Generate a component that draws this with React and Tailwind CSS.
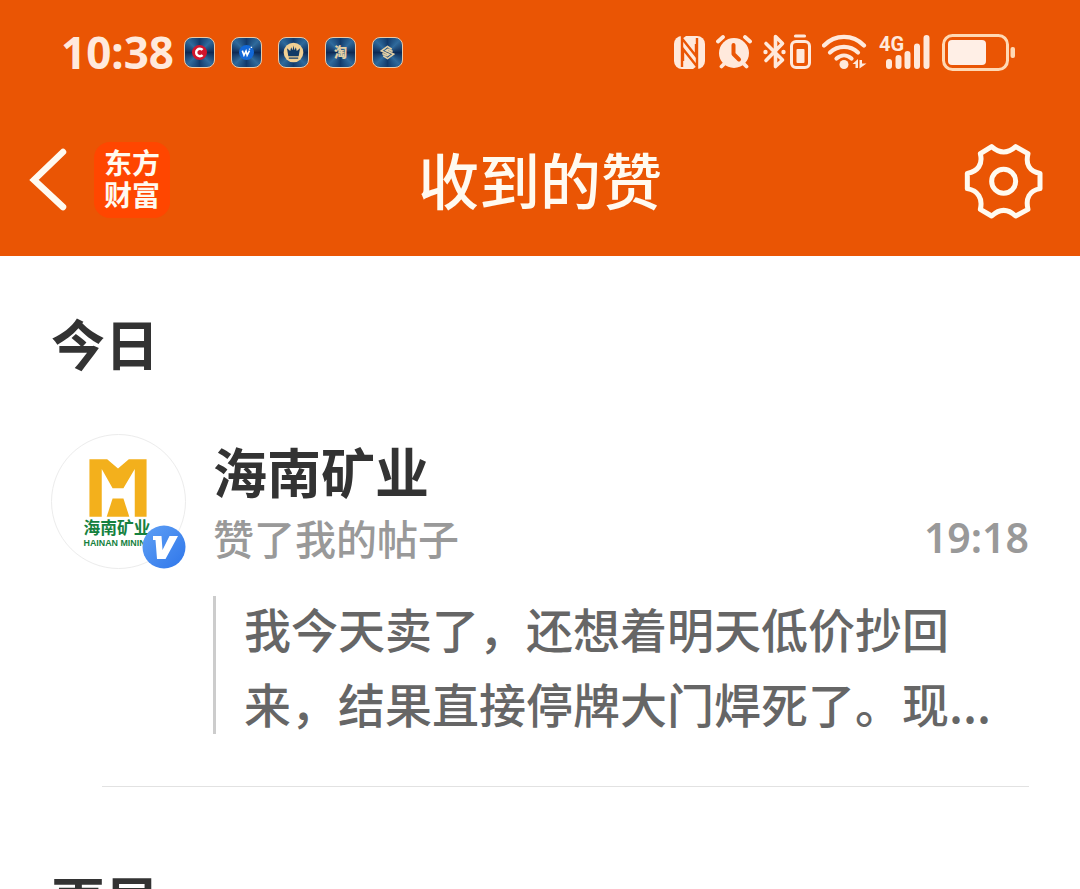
import clsx from 'clsx';

const TRAY_APPS = [
  { name: 'C', Glyph: RedC },
  { name: 'W', Glyph: BlueW },
  { name: 'crown', Glyph: Crown },
  { name: 'tao', Glyph: Tao },
  { name: 'knot', Glyph: Knot },
];

const GROUPS = [
  {
    title: '今日',
    items: [
      {
        name: '海南矿业',
        action: '赞了我的帖子',
        time: '19:18',
        lines: ['我今天卖了，还想着明天低价抄回', '来，结果直接停牌大门焊死了。现...'],
      },
    ],
  },
  { title: '更早', items: [] },
];

function RedC() {
  return (
    <>
      <circle cx="15.5" cy="15.5" r="8" fill="#d0142c" />
      <path d="M18.800 12.700a4 4 0 1 0 0 5.600" fill="none" stroke="#fff" strokeWidth="2.6" />
    </>
  );
}

function BlueW() {
  return (
    <>
      <circle cx="15.5" cy="15.5" r="8" fill="#1268d8" />
      <path d="M11 13.500l1.800 5 2.200-4.500 1.200 4.500 2.500-5" fill="none" stroke="#fff" strokeWidth="1.700" />
      <path d="M18 12h1.500M20 10h1.500" stroke="#fff" strokeWidth="1.3" />
    </>
  );
}

function Crown() {
  return (
    <>
      <circle cx="15.5" cy="15.5" r="10.500" fill="#f0cf93" />
      <path d="M8.500 11l3.500 3 1-4 1.500 3 1-5 1 5 1.500-3 1 4 3.500-3-1.500 8.500h-11z" fill="#123a66" />
      <path d="M10.500 21.500h10" stroke="#123a66" strokeWidth="1.500" />
    </>
  );
}

function Tao() {
  return (
    <text x="15.5" y="20.500" textAnchor="middle" fontSize="14" fontWeight="900" fill="#e3cfa4">
      淘
    </text>
  );
}

function Knot() {
  return (
    <g fill="none" stroke="#e3cfa4" strokeWidth="1.800">
      <path d="M20 12l-4.500-3-6.500 4.800 8 3.700-2 1.500-5-2.500" />
      <path d="M11 19l4.500 3 6.500-4.800-8-3.700 2-1.500 5 2.500" />
    </g>
  );
}

function TrayApp({ Glyph }) {
  return (
    <svg
      viewBox="0 0 31 31"
      className="size-[31px] rounded-lg border border-[#e8c9a8] bg-[conic-gradient(#123a6b,#2f6a9c,#0d2a55,#2f6a9c,#123a6b,#2f6a9c,#0d2a55,#2f6a9c,#123a6b)]"
    >
      <Glyph />
    </svg>
  );
}

function NfcIcon() {
  return (
    <svg viewBox="0 0 31 33" className="h-[33px] w-[31px]">
      <rect width="31" height="33" rx="8" fill="#ffe9dc" />
      <path d="M8 31V2.500L22 20V8" fill="none" stroke="#ea5504" strokeWidth="2.400" />
      <path d="M23 2v28.500L9 13v12" fill="none" stroke="#ea5504" strokeWidth="2.400" />
      <path d="M7 0h5l-4 3zM19 33h5l-1-3z" fill="#ea5504" />
    </svg>
  );
}

function AlarmIcon() {
  return (
    <svg viewBox="0 0 36 34" className="h-[34px] w-9" fill="none" stroke="#ffe9dc" strokeLinecap="round">
      <circle cx="18" cy="18" r="15" fill="#ffe9dc" stroke="none" />
      <path d="M2 6.500l5-4.500M34 6.500l-5-4.500M5.500 31.500l4-4M30.500 31.500l-4-4" strokeWidth="3.800" />
      <path d="M17.500 10v9l5.500 5.500" stroke="#ea5504" strokeWidth="4" strokeLinejoin="round" />
    </svg>
  );
}

function BluetoothIcon() {
  return (
    <svg viewBox="0 0 48 36" className="h-9 w-12" fill="none" stroke="#ffe9dc" strokeLinecap="round" strokeLinejoin="round">
      <path d="M3 9.500L19.500 26l-7 6.500v-30l7 7L3 26.500" strokeWidth="3.600" />
      <circle cx="2.500" cy="18" r="2.200" fill="#ffe9dc" stroke="none" />
      <circle cx="20.500" cy="18" r="2.200" fill="#ffe9dc" stroke="none" />
      <path d="M32.500 2h9" strokeWidth="3.200" />
      <rect x="28.500" y="7.500" width="18" height="26" rx="4.500" strokeWidth="3" />
      <rect x="33.500" y="15" width="8" height="14" rx="1" fill="#ffe9dc" stroke="none" />
    </svg>
  );
}

function WifiIcon() {
  return (
    <svg viewBox="0 0 46 36" className="h-9 w-[46px]" fill="none" stroke="#ffe9dc" strokeLinecap="round">
      <path d="M2 11.500C13 0 31 0 42 11.500" strokeWidth="4.200" />
      <path d="M8 18.500c8-7.500 20-7.500 28 0" strokeWidth="4.200" />
      <path d="M14.500 24.500c4.500-4 10.500-4 15 0" strokeWidth="4.200" />
      <circle cx="22" cy="30.500" r="4.500" fill="#ffe9dc" stroke="none" />
      <path d="M30.500 30L36 25v9h-2.500v-4zM37.500 34.500V26H40v3.500h4.500z" fill="#ffe9dc" stroke="none" />
    </svg>
  );
}

function SignalIcon() {
  return (
    <svg viewBox="0 0 52 36" className="h-9 w-[52px] overflow-visible">
      <text x="0" y="17" fontSize="20" fontWeight="700" fill="#ffe9dc" fontFamily="Roboto, sans-serif">
        4G
      </text>
      <path
        d="M10 32v-4M19.500 32v-8M28.500 32V20M38 32V12.500M47.500 32V4"
        stroke="#ffe9dc"
        strokeWidth="6"
        strokeLinecap="round"
      />
    </svg>
  );
}

function BatteryIcon() {
  return (
    <svg viewBox="0 0 74 37" className="h-[37px] w-[74px]">
      <rect x="1.500" y="1.500" width="64" height="34" rx="9" fill="none" stroke="#ffd9b4" strokeWidth="3" />
      <rect x="6" y="6" width="38" height="25" rx="4" fill="#ffefe6" />
      <rect x="68.500" y="13" width="4.500" height="11" rx="2" fill="#ffd9b4" />
    </svg>
  );
}

function StatusBar() {
  return (
    <div className="flex h-[104px] items-center justify-between pr-[64px] pl-[61px] text-[#ffe9dc]">
      <div className="flex items-center gap-2.5">
        <span className="font-['Noto_Sans','Open_Sans',sans-serif] text-[44px] leading-none font-bold">10:38</span>
        <div className="flex gap-4">
          {TRAY_APPS.map((app) => (
            <TrayApp key={app.name} Glyph={app.Glyph} />
          ))}
        </div>
      </div>
      <div className="flex items-center gap-[11px]">
        <NfcIcon />
        <AlarmIcon />
        <BluetoothIcon />
        <WifiIcon />
        <SignalIcon />
        <BatteryIcon />
      </div>
    </div>
  );
}

function NavBar() {
  return (
    <nav className="grid h-[152px] grid-cols-[1fr_auto_1fr] items-center px-7 text-[#fffaf0]">
      <div className="flex items-center gap-6">
        <button type="button" aria-label="返回">
          <svg viewBox="0 0 42 66" className="h-[66px] w-[42px]" fill="none" stroke="#fffaf0" strokeWidth="6.500" strokeLinecap="round" strokeLinejoin="miter">
            <path d="M35 5L6 33l29 27" />
          </svg>
        </button>
        <a
          href="#home"
          className="flex size-[76px] flex-col items-center justify-center rounded-2xl bg-[#ff4600] pb-1 text-[28px] leading-8 font-bold"
        >
          <span>东方</span>
          <span>财富</span>
        </a>
      </div>
      <h1 className="pb-1 text-[61px] leading-none font-medium">收到的赞</h1>
      <button type="button" aria-label="设置" className="mr-2 justify-self-end">
        <svg viewBox="42 38 240 231" className="h-[77px] w-20" fill="none" stroke="#fffaf0" strokeWidth="15" strokeLinejoin="round">
          <path d="M125 52Q161 84 197 52L234 73C226 105 238 126 270 132V178C238 184 226 207 234 240L197 260Q161 226 125 260L91 240C99 207 84 184 52 178V132C84 126 99 105 91 73Z" />
          <circle cx="161" cy="156" r="36" />
        </svg>
      </button>
    </nav>
  );
}

function Avatar() {
  return (
    <div className="relative size-[135px] shrink-0">
      <svg viewBox="0 0 135 135" className="size-full rounded-full border border-[#ececec]">
        <path
          d="M38 24.500h18L67 34l11-9.500h18V83H84V34.500L72.500 54h-11L50.500 34.500V83H38z"
          fill="#f3b01c"
        />
        <path d="M61.500 64.500h11L78.500 83h-23z" fill="#f3b01c" />
        <text x="32" y="100" fontSize="17" fontWeight="700" fill="#16813f">
          海南矿业
        </text>
        <text x="32" y="113" fontSize="9" fontWeight="700" fill="#16813f" fontFamily="Liberation Sans, sans-serif">
          HAINAN MINING
        </text>
      </svg>
      <svg viewBox="0 0 44 44" className="absolute right-0 bottom-0 size-11">
        <defs>
          <linearGradient id="badge" x1="0" y1="0" x2="1" y2="1">
            <stop offset="0" stopColor="#5fa0f5" />
            <stop offset="1" stopColor="#2f76ea" />
          </linearGradient>
        </defs>
        <circle cx="22" cy="22" r="21.500" fill="url(#badge)" />
        <path d="M11 11h8.500l1 14 7-14H36L23.500 34H15l-1.500-19H11z" fill="#fff" />
      </svg>
    </div>
  );
}

function LikeItem({ item }) {
  return (
    <article className="flex gap-[27px] px-[51px] pb-[46px]">
      <Avatar />
      <div className="min-w-0 flex-1 pt-1">
        <h3 className="text-[54px] leading-[66px] font-bold text-[#333]">{item.name}</h3>
        <div className="flex justify-between text-[41px] leading-[66px] font-medium text-[#999]">
          <span>{item.action}</span>
          <time className="font-['Noto_Sans','Open_Sans',sans-serif] font-semibold">{item.time}</time>
        </div>
        <div className="mt-5 flex gap-7">
          <div className="my-1.5 w-[3px] shrink-0 bg-[#ccc]" />
          <p className="text-[47px] leading-[75px] font-medium text-[#666]">
            {item.lines.map((line) => (
              <span key={line} className="block whitespace-nowrap">
                {line}
              </span>
            ))}
          </p>
        </div>
      </div>
    </article>
  );
}

export default function App() {
  return (
    <div
      lang="zh-CN"
      className="flex h-screen flex-col bg-white font-['Noto_Sans_CJK_SC',sans-serif]"
    >
      <header className="shrink-0 bg-[#ea5504]">
        <StatusBar />
        <NavBar />
      </header>
      <main className="min-h-0 flex-1 overflow-y-auto [scrollbar-width:none]">
        {GROUPS.map((group, i) => (
          <section key={group.title} className={clsx(i === 0 ? 'pt-[47px]' : 'pt-[73px]')}>
            <h2 className="mb-[51px] pl-[51px] text-[54px] leading-[80px] font-bold text-[#333]">{group.title}</h2>
            {group.items.map((item) => (
              <div key={item.name}>
                <LikeItem item={item} />
                <hr className="mr-[51px] ml-[102px] border-[#e2e2e2]" />
              </div>
            ))}
          </section>
        ))}
      </main>
    </div>
  );
}
